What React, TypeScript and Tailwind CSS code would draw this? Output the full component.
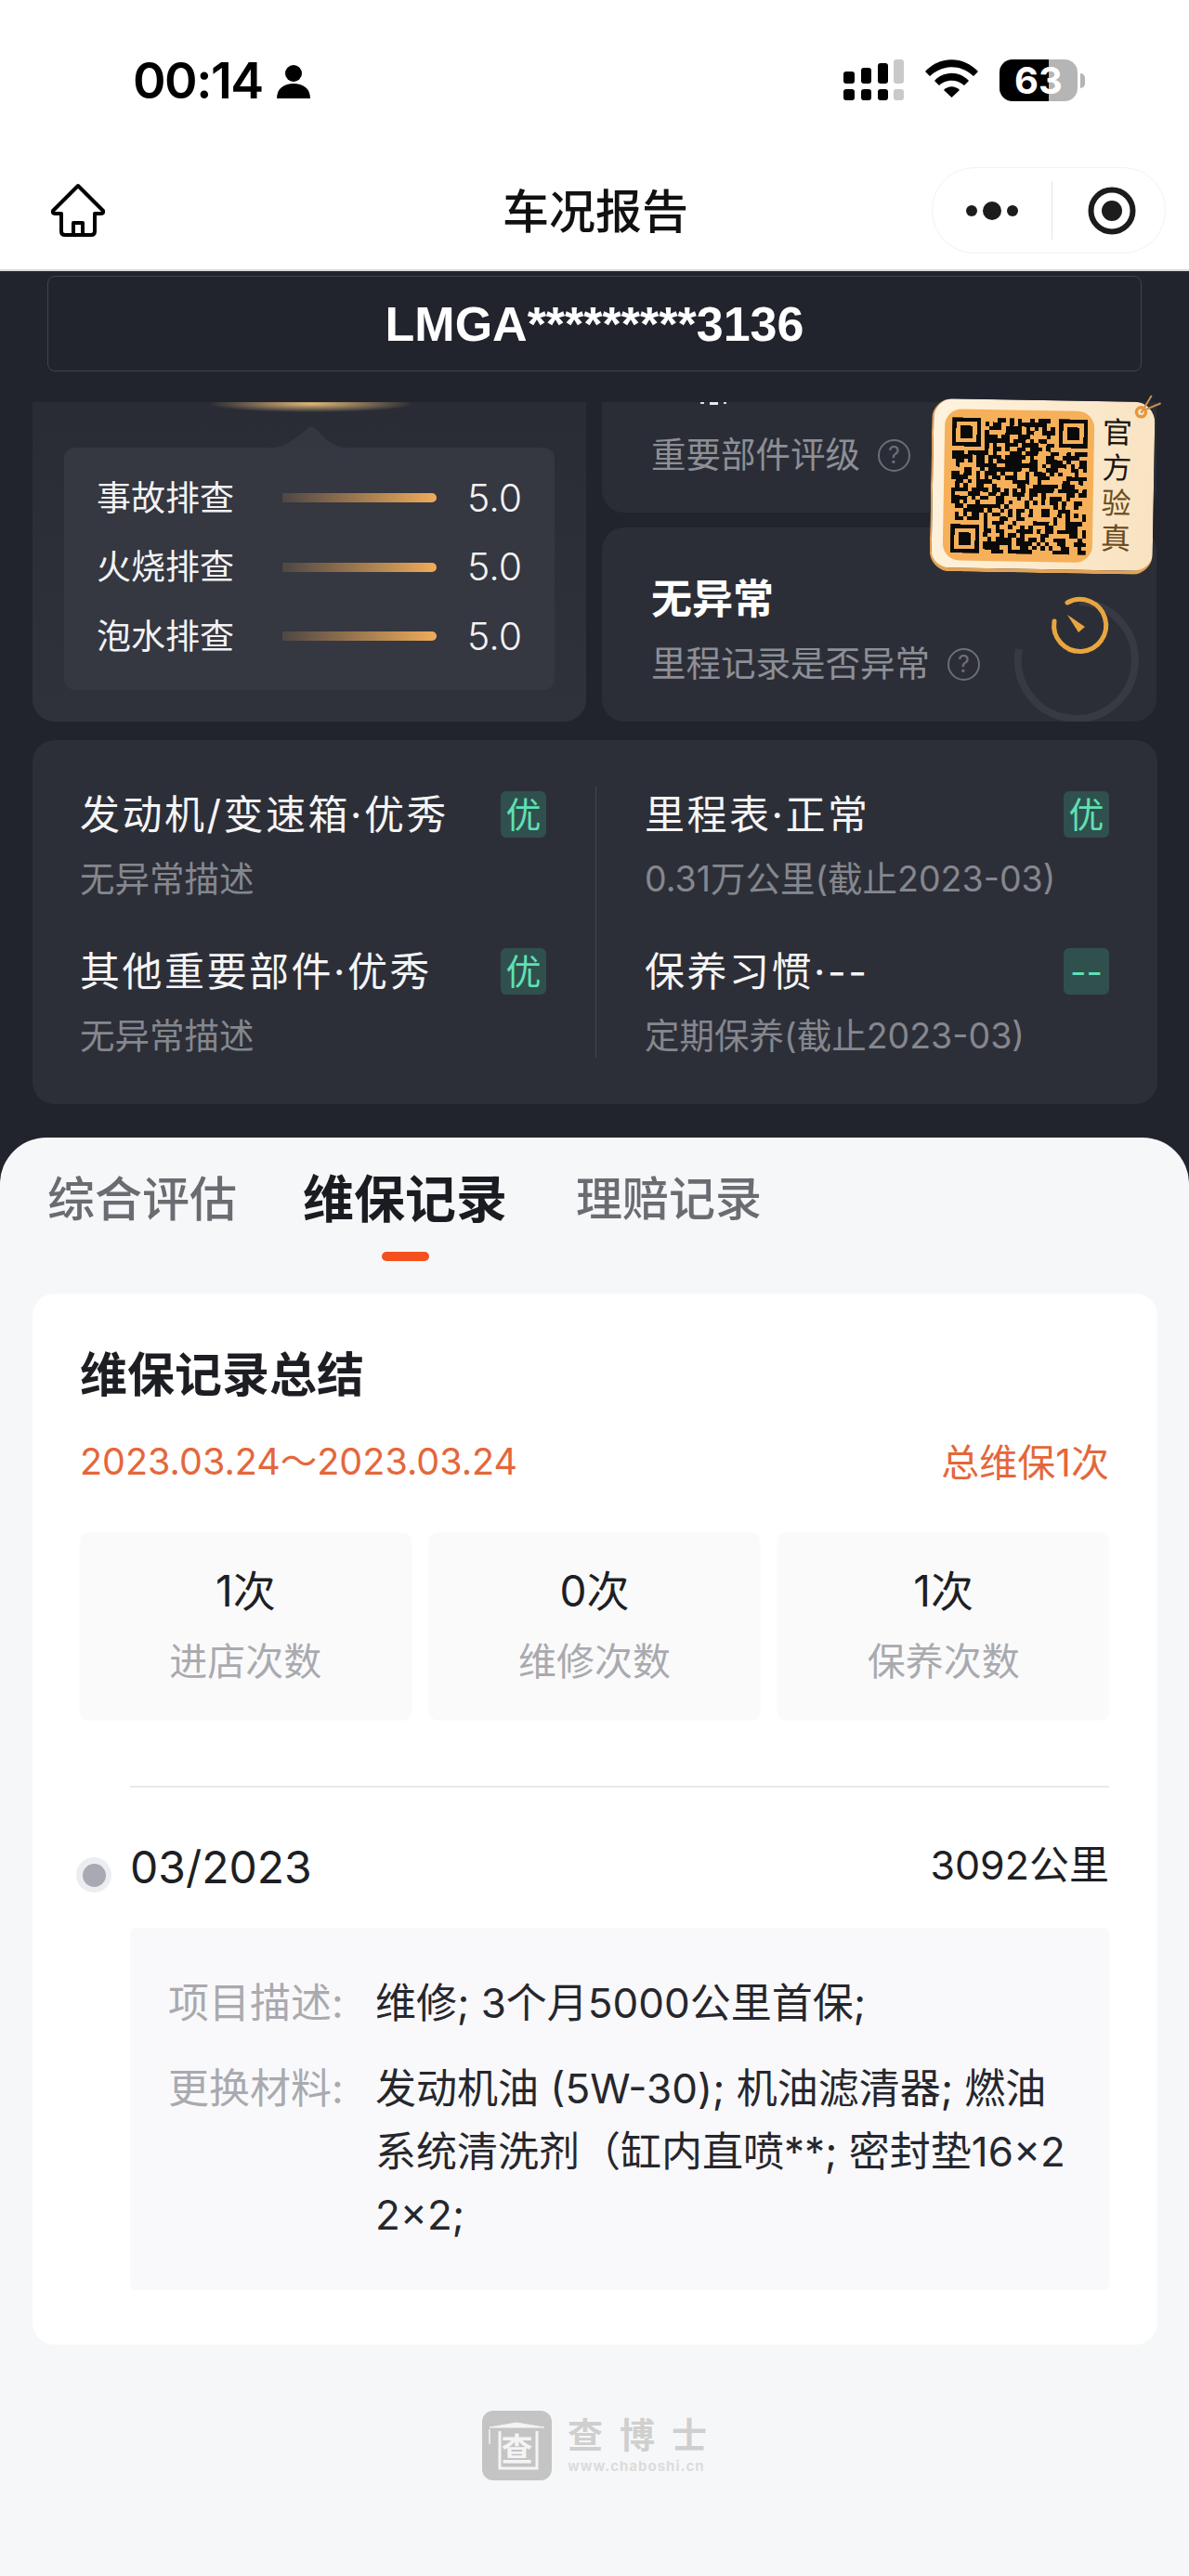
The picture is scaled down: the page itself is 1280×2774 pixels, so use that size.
import React from "react"

// fake qr modules, only has to look like the one in the tag
const QR_SIZE = 33
function buildQrPath() {
  let d = ""
  let seed = 20230324
  const next = () => {
    seed = (seed * 1103515245 + 12345) & 0x7fffffff
    return (seed >> 12) % 100
  }
  const inFinder = (x: number, y: number) =>
    (x < 8 && y < 8) || (x >= QR_SIZE - 8 && y < 8) || (x < 8 && y >= QR_SIZE - 8)
  for (let y = 0; y < QR_SIZE; y++) {
    for (let x = 0; x < QR_SIZE; x++) {
      if (inFinder(x, y)) continue
      if (next() < 56) d += `M${x} ${y}h1v1h-1z`
    }
  }
  return d
}
const qrPath = buildQrPath()

const scanItems = ["事故排查", "火烧排查", "泡水排查"]

const partItems = [
  [
    { title: "发动机/变速箱·优秀", desc: "无异常描述", badge: "优" },
    { title: "其他重要部件·优秀", desc: "无异常描述", badge: "优" },
  ],
  [
    { title: "里程表·正常", desc: "0.31万公里(截止2023-03)", badge: "优" },
    { title: "保养习惯·--", desc: "定期保养(截止2023-03)", badge: "--" },
  ],
]

const stats = [
  { value: "1次", label: "进店次数" },
  { value: "0次", label: "维修次数" },
  { value: "1次", label: "保养次数" },
]

function Finder({ x, y }: { x: number; y: number }) {
  return (
    <g>
      <rect x={x + 0.5} y={y + 0.5} width={6} height={6} fill="none" stroke="#0a0a0a" strokeWidth={1} />
      <rect x={x + 2} y={y + 2} width={3} height={3} fill="#0a0a0a" />
    </g>
  )
}

function QrTag() {
  return (
    <div className="absolute left-[354px] top-[-2px] z-10 flex h-[186px] w-[240px] rotate-[1deg] rounded-[22px] border-b-[4px] border-l-[2px] border-[#e2a356] bg-[linear-gradient(100deg,#fff3de,#f8e2c0)] pl-[12px] pt-[11px]">
      <div className="flex h-[163px] w-[161px] items-center justify-center rounded-[18px] bg-[#f6b059]">
        <svg width="146" height="146" viewBox="0 0 33 33" shapeRendering="crispEdges">
          <path d={qrPath} fill="#0a0a0a" />
          <Finder x={0} y={0} />
          <Finder x={26} y={0} />
          <Finder x={0} y={26} />
        </svg>
      </div>
      <div className="ml-[8px] flex w-[34px] flex-col items-center pt-[4px] text-[32px] leading-[38px]">
        <span className="text-[#1b1712]">官</span>
        <span className="text-[#1b1712]">方</span>
        <span className="text-[#6b4c1e]">验</span>
        <span className="text-[#6b4c1e]">真</span>
      </div>
      <svg className="absolute right-[-8px] top-[-10px]" width="36" height="36" viewBox="0 0 36 36">
        <path d="M13 22 L24 3 M16 19 L34 11" stroke="#c98f4f" strokeWidth="2" fill="none" />
        <circle cx="13" cy="21" r="5" fill="none" stroke="#e8963a" strokeWidth="3.5" />
      </svg>
    </div>
  )
}

function HelpIcon() {
  return (
    <span className="ml-[19px] flex h-[35px] w-[35px] shrink-0 items-center justify-center rounded-full border-[2px] border-[#6c6e76] text-[25px] leading-none text-[#6c6e76]">
      ?
    </span>
  )
}

export default function App() {
  return (
    <div className="h-[2774px] w-[1280px] overflow-hidden bg-[#22242d] font-['Inter','Noto_Sans_CJK_SC',sans-serif]">
      {/* status bar */}
      <div className="flex h-[170px] items-start bg-white pl-[143px] pr-[112px] pt-[60px]">
        <div className="flex h-[54px] items-center text-[54px] font-semibold leading-none tracking-[-1.5px] text-black">00:14</div>
        <svg className="ml-[15px] mt-[10px]" width="36" height="36" viewBox="0 0 36 36" fill="#000">
          <circle cx="18" cy="9" r="9" />
          <path d="M0 36 C0 25 8 20 18 20 C28 20 36 25 36 36 Z" />
        </svg>
        <div className="ml-auto flex items-start pt-[4px]">
          <svg width="65" height="44" viewBox="0 0 65 44">
            <rect x="0" y="13" width="12" height="13" rx="3" />
            <rect x="19" y="9" width="11" height="17" rx="3" />
            <rect x="37" y="4" width="11" height="22" rx="3" />
            <rect x="54" y="0" width="11" height="26" rx="3" fill="#c9c9c9" />
            <rect x="0" y="32" width="12" height="12" rx="3" />
            <rect x="19" y="32" width="11" height="12" rx="3" />
            <rect x="37" y="32" width="11" height="12" rx="3" />
            <rect x="54" y="32" width="11" height="12" rx="3" fill="#c9c9c9" />
          </svg>
          <svg className="ml-[23px]" width="57" height="42" viewBox="0 0 57 42">
            <path d="M0 13 C16 -4 41 -4 57 13 L52 18 C38 5 19 5 5 18 Z" />
            <path d="M10 23 C20 12 37 12 47 23 L42 28 C34 21 23 21 15 28 Z" />
            <path d="M20 33 C25 28 32 28 37 33 L28.5 41 Z" />
          </svg>
          <div className="ml-[23px] flex items-center">
            <div className="flex h-[45px] w-[84px] items-center justify-center rounded-[14px] bg-[linear-gradient(90deg,#000_63%,#b5b5b5_63%)] text-[40px] font-bold leading-none text-white">
              63
            </div>
            <div className="ml-[3px] h-[16px] w-[5px] rounded-r-full bg-[#b5b5b5]" />
          </div>
        </div>
      </div>

      {/* nav bar */}
      <div className="flex h-[122px] items-start border-b-[2px] border-[#d9d9d9] bg-white">
        <svg className="ml-[54px] mt-[27px]" width="60" height="58" viewBox="0 0 60 58" fill="none" stroke="#000" strokeWidth="4" strokeLinejoin="round">
          <path d="M30 3 L3 30 Q2 33 5 33 H12 V52 Q12 56 16 56 H44 Q48 56 48 52 V33 H55 Q58 33 57 30 Z" />
          <path d="M25 56 V43 H35 V56" />
        </svg>
        <div className="ml-[427px] mt-[33px] w-[196px] whitespace-nowrap text-center text-[50px] font-medium leading-[50px] text-[#111]">车况报告</div>
        <div className="ml-[266px] mt-[10px] flex h-[93px] w-[252px] items-center rounded-[46px] border border-[#f2f2f2] bg-white">
          <svg className="ml-[36px]" width="56" height="20" viewBox="0 0 56 20" fill="#1c1c1c">
            <circle cx="6" cy="10" r="6" />
            <circle cx="28" cy="10" r="10" />
            <circle cx="50" cy="10" r="6" />
          </svg>
          <div className="ml-[36px] h-[63px] w-px bg-[#e4e4e4]" />
          <svg className="ml-[38px]" width="52" height="52" viewBox="0 0 52 52">
            <circle cx="26" cy="26" r="22.5" fill="none" stroke="#1c1c1c" strokeWidth="6" />
            <circle cx="26" cy="26" r="11" fill="#1c1c1c" />
          </svg>
        </div>
      </div>

      {/* report head */}
      <div className="h-[933px] bg-[#22242d] pt-[5px]">
        <div className="mx-[51px] flex h-[103px] w-[1178px] items-center justify-center rounded-[8px] border border-[#42444d] font-['Liberation_Sans',sans-serif] text-[52px] font-bold leading-none text-white">
          LMGA*********3136
        </div>

        <div className="mt-[33px] flex pl-[35px]">
          <div className="relative h-[344px] w-[596px] overflow-hidden rounded-b-[24px] bg-[linear-gradient(180deg,#2a2c35,#30323b)] pt-[49px]">
            <div className="absolute left-[190px] top-[-7px] h-[18px] w-[220px] rounded-[50%] bg-[radial-gradient(closest-side,#e0b878,#e0b87800)]" />
            <svg className="absolute left-[250px] top-[26px]" width="100" height="24" viewBox="0 0 100 24" fill="#343640">
              <path d="M0 24 C20 24 30 16 48 1 C52 -1 56 4 66 14 C76 22 84 24 100 24 Z" />
            </svg>
            <div className="mx-[34px] h-[261px] rounded-[12px] bg-[#353741] pl-[35px] pr-[35px] pt-[17px]">
              {scanItems.map((name) => (
                <div key={name} className="flex h-[74.5px] items-center">
                  <span className="w-[200px] text-[37px] leading-none text-[#f2f2f3]">{name}</span>
                  <div className="h-[10px] w-[166px] rounded-r-full bg-[linear-gradient(90deg,#f0ac5a22,#f0ac5a)]" />
                  <span className="ml-auto text-[41px] font-light leading-none text-[#f2f2f3]">5.0</span>
                </div>
              ))}
            </div>
          </div>

          <div className="relative ml-[17px] w-[597px]">
            <div className="relative h-[119px] overflow-hidden rounded-b-[24px] bg-[#2b2d36] pl-[53px] pt-[37px]">
              {/* bits of the line that scrolled under the header */}
              <div className="absolute left-[106px] top-0 flex gap-[6px]">
                <div className="h-[2px] w-[4px] bg-[#d8d8da]" />
                <div className="h-[3px] w-[9px] bg-[#e8e8ea]" />
                <div className="h-[2px] w-[3px] bg-[#d8d8da]" />
              </div>
              <div className="flex h-[40px] items-center">
                <span className="text-[37.5px] leading-none text-[#8d8f96]">重要部件评级</span>
                <HelpIcon />
              </div>
            </div>
            <div className="relative mt-[16px] h-[209px] overflow-hidden rounded-[24px] bg-[#2c2e37] pl-[53px] pt-[53px]">
              <svg className="absolute bottom-0 right-0" width="160" height="140" viewBox="0 0 160 140" fill="none">
                <path d="M77 11 A63 63 0 1 1 12 62" stroke="#383a43" strokeWidth="8" />
                <g transform="translate(3 2)">
                  <path d="M61 10 A28 28 0 1 1 47 30" stroke="#e9a63f" strokeWidth="5" strokeLinecap="round" />
                  <path d="M61 23 L73 42 L80 36 Z" fill="#e9a63f" />
                </g>
              </svg>
              <div className="h-[48px] text-[44px] font-bold leading-[48px] text-white">无异常</div>
              <div className="mt-[26px] flex h-[40px] items-center">
                <span className="text-[37.5px] leading-none text-[#8d8f96]">里程记录是否异常</span>
                <HelpIcon />
              </div>
            </div>
            <QrTag />
          </div>
        </div>

        <div className="ml-[35px] mt-[20px] flex h-[392px] w-[1211px] rounded-[24px] bg-[#2d2f38] pt-[55px]">
          {partItems.map((col, i) => (
            <React.Fragment key={i}>
              {i === 1 && <div className="ml-[53px] -mt-[5px] h-[292px] w-px bg-[#44464e]" />}
              <div className={i === 0 ? "ml-[51px] w-[502px]" : "ml-[52px] w-[500px]"}>
                {col.map((item) => (
                  <div key={item.title} className="mb-[52px]">
                    <div className="flex h-[50px] items-center justify-between">
                      <span className="text-[43px] leading-none tracking-[2.5px] text-[#f5f5f6]">{item.title}</span>
                      <span className="flex h-[50px] w-[49px] items-center justify-center rounded-[6px] bg-[#30504e] text-[38px] leading-none text-[#5fe0b4]">
                        {item.badge}
                      </span>
                    </div>
                    <div className="mt-[23px] h-[44px] text-[37.5px] leading-[44px] text-[#85878e]">{item.desc}</div>
                  </div>
                ))}
              </div>
            </React.Fragment>
          ))}
        </div>
      </div>

      {/* white sheet */}
      <div className="h-[1549px] rounded-t-[50px] bg-[#f6f7f8] pt-[31px]">
        <div className="flex h-[70px] items-center pl-[51px]">
          <span className="text-[51px] font-medium leading-none text-[#6a6c72]">综合评估</span>
          <span className="ml-[71px] text-[55px] font-bold leading-none text-[#1b1c22]">维保记录</span>
          <span className="ml-[74px] text-[50px] font-medium leading-none text-[#6a6c72]">理赔记录</span>
        </div>
        <div className="ml-[411px] mt-[22px] h-[10px] w-[51px] rounded-full bg-[#f4511e]" />

        <div className="ml-[35px] mt-[35px] h-[1132px] w-[1211px] rounded-[24px] bg-white pl-[51px] pr-[52px] pt-[58px]">
          <div className="h-[60px] text-[51px] font-bold leading-[60px] text-[#1d1e24]">维保记录总结</div>
          <div className="mt-[39px] flex h-[50px] items-center justify-between leading-none text-[#e4673a]">
            <span className="text-[39.5px]">2023.03.24～2023.03.24</span>
            <span className="text-[41px]">总维保1次</span>
          </div>

          <div className="mt-[51px] grid grid-cols-3 gap-[21px] px-[1px]">
            {stats.map((s) => (
              <div key={s.label} className="flex h-[199px] flex-col items-center rounded-[8px] bg-[#fafafb] pt-[37px] shadow-[0_1px_4px_#f4f4f6]">
                <div className="h-[50px] text-[46px] leading-[50px] text-[#1e1f25]">{s.value}</div>
                <div className="mt-[26px] h-[50px] text-[41px] leading-[50px] text-[#a9aaaf]">{s.label}</div>
              </div>
            ))}
          </div>

          <div className="ml-[54px] mt-[73px] h-[2px] bg-[#e9e9eb]" />

          <div className="-ml-[4px] mt-[56px] flex h-[60px] items-start">
            <div className="mt-[19px] flex h-[38px] w-[38px] items-center justify-center rounded-full bg-[#ecedf0]">
              <div className="h-[25px] w-[25px] rounded-full bg-[#a8a9b3]" />
            </div>
            <span className="ml-[20px] text-[48px] leading-[60px] text-[#1e1f25]">03/2023</span>
            <span className="ml-auto -mt-[3px] text-[43px] leading-[60px] text-[#1e1f25]">3092公里</span>
          </div>

          <div className="ml-[54px] mt-[35px] h-[390px] rounded-[6px] bg-[#f9f9fb] pl-[41px] pt-[47px] text-[44px] leading-[68px]">
            <div className="flex">
              <span className="w-[223px] shrink-0 text-[#a9aaaf]">项目描述:</span>
              <span className="text-[#26272d]">维修; 3个月5000公里首保;</span>
            </div>
            <div className="mt-[24px] flex">
              <span className="w-[223px] shrink-0 text-[#a9aaaf]">更换材料:</span>
              <span className="whitespace-nowrap text-[#26272d]">
                发动机油 (5W-30); 机油滤清器; 燃油
                <br />
                系统清洗剂（缸内直喷**; 密封垫16×2
                <br />
                2×2;
              </span>
            </div>
          </div>
        </div>

        {/* footer logo */}
        <div className="ml-[519px] mt-[71px] flex">
          <div className="relative flex h-[75px] w-[75px] items-center justify-center rounded-[12px] bg-[#c4c4c4]">
            <svg className="absolute left-[5px] top-[12px]" width="65" height="56" viewBox="0 0 65 56" fill="none" stroke="#f4f4f4">
              <path d="M3 6 L62 6 L32 1 Z" fill="#f4f4f4" strokeWidth="1" />
              <path d="M14 10 V50 H54 V10" strokeWidth="3" />
              <path d="M3 8 V24" strokeWidth="1.5" />
            </svg>
            <span className="relative mt-[8px] text-[34px] font-bold leading-none text-[#f4f4f4]">查</span>
          </div>
          <div className="ml-[17px] w-[150px]">
            <div className="mt-[6px] flex h-[40px] items-center justify-between text-[38px] font-bold leading-none text-[#cfcfcf]">
              <span>查</span>
              <span>博</span>
              <span>士</span>
            </div>
            <div className="mt-[6px] whitespace-nowrap text-[15px] font-bold leading-[16px] tracking-[1px] text-[#dcdcdc]">www.chaboshi.cn</div>
          </div>
        </div>
      </div>
    </div>
  )
}
